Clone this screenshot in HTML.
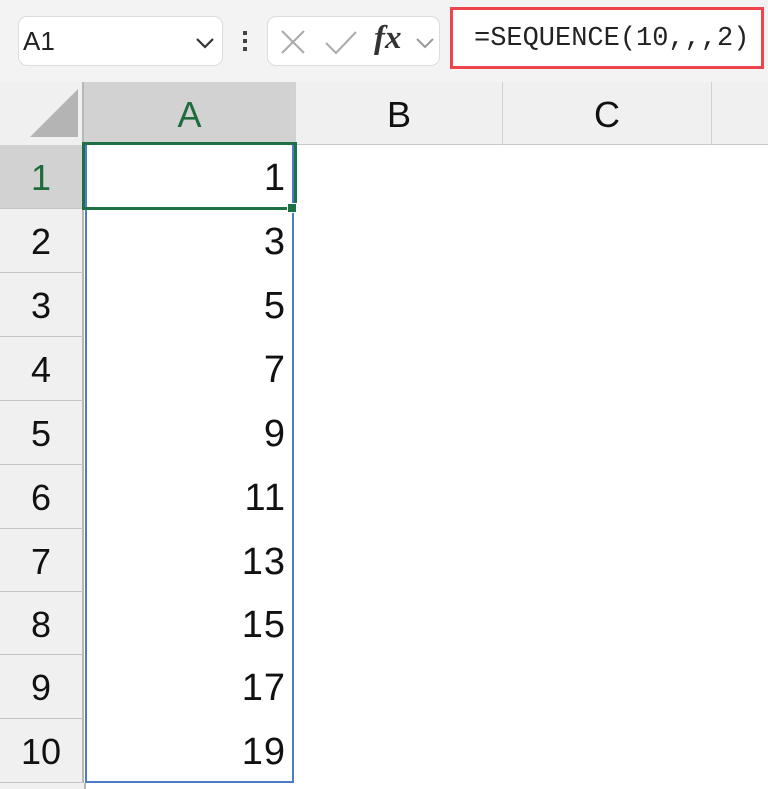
<!DOCTYPE html>
<html><head><style>
*{margin:0;padding:0;box-sizing:border-box}
body{width:768px;height:789px;overflow:hidden;background:#fff;font-family:"Liberation Sans",sans-serif;position:relative}
.tb{position:absolute;left:0;top:0;width:768px;height:82px;background:#f3f3f3}
.box{position:absolute;background:#fff;border:1px solid #dcdcdc;border-radius:9px}
.hdr{position:absolute;top:82px;height:63px;background:#f0f0f0;border-bottom:1px solid #c8c8c8}
.ch{position:absolute;top:82px;height:63px;font-size:36px;text-align:center;line-height:66px;border-right:1px solid #d0d0d0}
.rh{position:absolute;left:0;width:84px;background:#f0f0f0;border-bottom:1px solid #c4c4c4;border-right:2px solid #b8b8b8;font-size:36px;text-align:center;line-height:66px;color:#111}
.v{position:absolute;left:86px;width:200px;text-align:right;font-size:38px;line-height:66px;color:#111;letter-spacing:1px}
</style></head><body>
<div class="tb"></div>
<div class="box" style="left:18px;top:16px;width:205px;height:50px"><span style="position:absolute;left:4px;top:9px;font-size:26px;color:#222">A1</span>
<svg style="position:absolute;left:176px;top:19px" width="20" height="14"><path d="M2 3 L10 11 L18 3" fill="none" stroke="#333" stroke-width="2.2"/></svg></div>
<div style="position:absolute;left:243px;top:31px;width:4px;height:20px">
<div style="width:4px;height:4px;background:#444;margin-bottom:4px"></div><div style="width:4px;height:4px;background:#444;margin-bottom:4px"></div><div style="width:4px;height:4px;background:#444"></div></div>
<div class="box" style="left:267px;top:16px;width:173px;height:50px">
<svg style="position:absolute;left:11px;top:11px" width="28" height="28"><path d="M3 3 L25 25 M25 3 L3 25" stroke="#aaa" stroke-width="2"/></svg>
<svg style="position:absolute;left:56px;top:11px" width="34" height="28"><path d="M2 15 L12 25 L32 4" fill="none" stroke="#aaa" stroke-width="2"/></svg>
<span style="position:absolute;left:106px;top:3px;font-family:'Liberation Serif',serif;font-style:italic;font-weight:bold;font-size:33px;color:#333">fx</span>
<svg style="position:absolute;left:147px;top:20px" width="20" height="12"><path d="M2 2 L10 10 L18 2" fill="none" stroke="#999" stroke-width="2"/></svg></div>
<div style="position:absolute;left:450px;top:7px;width:314px;height:62px;background:#fff;border:3px solid #f0444c"><span style="position:absolute;left:21px;top:14px;font-family:'Liberation Mono',monospace;font-size:27px;color:#222">=SEQUENCE(10,,,2)</span></div>
<div class="hdr" style="left:0;width:768px"></div>
<div style="position:absolute;left:0;top:82px;width:84px;height:63px;background:#f0f0f0;border-right:2px solid #b8b8b8"></div>
<svg style="position:absolute;left:30px;top:89px" width="48" height="48"><path d="M48 0 L48 48 L0 48 Z" fill="#b4b4b4"/></svg>
<div class="ch" style="left:84px;width:212px;background:#d2d2d2;color:#1e6b3c;border-bottom:1px solid #c8c8c8">A</div>
<div class="ch" style="left:296px;width:207px;color:#111">B</div>
<div class="ch" style="left:503px;width:209px;color:#111">C</div>
<div class="rh" style="top:145px;height:64px;background:#d2d2d2;color:#1e6b3c">1</div>
<div class="rh" style="top:209px;height:64px">2</div>
<div class="rh" style="top:273px;height:64px">3</div>
<div class="rh" style="top:337px;height:64px">4</div>
<div class="rh" style="top:401px;height:64px">5</div>
<div class="rh" style="top:465px;height:64px">6</div>
<div class="rh" style="top:529px;height:63px">7</div>
<div class="rh" style="top:592px;height:63px">8</div>
<div class="rh" style="top:655px;height:64px">9</div>
<div class="rh" style="top:719px;height:64px">10</div>
<div style="position:absolute;left:0;top:783px;width:86px;height:6px;background:#f0f0f0;border-right:2px solid #b8b8b8"></div>
<div style="position:absolute;left:85px;top:145px;width:209px;height:638px;border:2px solid #4a7cc9;border-top:none"></div>
<div style="position:absolute;left:82px;top:142px;width:215px;height:68px;border:3px solid #1e7145"></div>
<div style="position:absolute;left:287px;top:203px;width:10px;height:10px;background:#1e7145;border:1px solid #fff"></div>
<div class="v" style="top:145px">1</div>
<div class="v" style="top:209px">3</div>
<div class="v" style="top:273px">5</div>
<div class="v" style="top:337px">7</div>
<div class="v" style="top:401px">9</div>
<div class="v" style="top:465px">11</div>
<div class="v" style="top:529px">13</div>
<div class="v" style="top:592px">15</div>
<div class="v" style="top:655px">17</div>
<div class="v" style="top:719px">19</div>
</body></html>
